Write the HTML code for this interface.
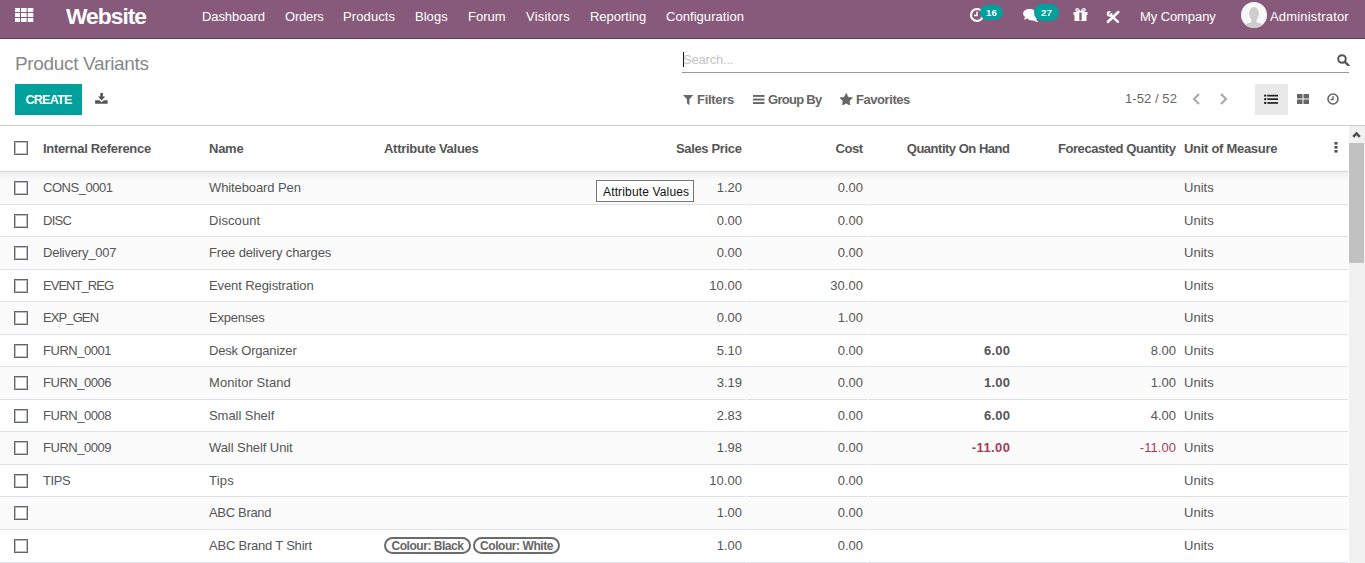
<!DOCTYPE html>
<html><head><meta charset="utf-8">
<style>
*{box-sizing:border-box;margin:0;padding:0}
html,body{width:1365px;height:563px;overflow:hidden;background:#fff}
body{font-family:"Liberation Sans",sans-serif;font-size:13px;color:#555;position:relative}
.a{position:absolute;white-space:nowrap;line-height:1}
#nav{position:absolute;left:0;top:0;width:1365px;height:39px;background:#875a7b;border-bottom:1px solid #5f3f57}
#nav .a{color:#fff}
.menu{font-size:13px;top:10px}
.b{font-weight:bold}
.hdr{font-weight:bold;top:142px}
.r{text-align:right}
.gap{position:absolute;width:1px;height:1px;background:#fff}
.cb{position:absolute;width:14px;height:14px;border:1px solid #666;box-shadow:inset 0 0 0 1px #b9bfc7;background:#fff;left:14px}
.row{position:absolute;left:0;width:1348px;border-bottom:1px solid #dee2e6}
.row.s{background:#fbfbfb}
.td{top:0}
.neg{color:#ac3a55}
.pill{position:absolute;height:17px;border:2px solid #6b6b6b;border-radius:9px;font-weight:bold;font-size:12px;color:#666;line-height:14px;text-align:center;white-space:nowrap}
</style></head><body>
<div id="nav">
  <!-- grid icon -->
  <svg class="a" style="left:15px;top:8px" width="19" height="14" viewBox="0 0 19 14">
    <g fill="#fff">
      <rect x="0" y="0" width="5" height="4"></rect><rect x="6" y="0" width="5.6" height="4"></rect><rect x="12.7" y="0" width="5.6" height="4"></rect>
      <rect x="0" y="5" width="5" height="4"></rect><rect x="6" y="5" width="5.6" height="4"></rect><rect x="12.7" y="5" width="5.6" height="4"></rect>
      <rect x="0" y="10" width="5" height="4"></rect><rect x="6" y="10" width="5.6" height="4"></rect><rect x="12.7" y="10" width="5.6" height="4"></rect>
    </g>
  </svg>
  <div class="a b nofit" style="left:66px;top:5px;font-size:22.8px;letter-spacing:-1px">Website</div>
  <div class="a menu" style="left: 202px; letter-spacing: -0.082px;">Dashboard</div>
  <div class="a menu" style="left: 285px; letter-spacing: -0.193px;">Orders</div>
  <div class="a menu" style="left: 343px; letter-spacing: 0.107px;">Products</div>
  <div class="a menu" style="left: 415px; letter-spacing: 0.031px;">Blogs</div>
  <div class="a menu" style="left: 468px; letter-spacing: -0.022px;">Forum</div>
  <div class="a menu" style="left: 526px; letter-spacing: 0.197px;">Visitors</div>
  <div class="a menu" style="left: 590px; letter-spacing: -0.016px;">Reporting</div>
  <div class="a menu" style="left: 666px; letter-spacing: 0.049px;">Configuration</div>

  <!-- activity clock -->
  <svg class="a" style="left:969px;top:7px" width="16" height="16" viewBox="0 0 16 16">
    <circle cx="8" cy="8" r="6" fill="none" stroke="#fff" stroke-width="2.2"></circle>
    <path d="M8 4.5V8.5H5" fill="none" stroke="#fff" stroke-width="1.5"></path>
  </svg>
  <div class="a" style="left: 980.09px; top: 5px; width: 23px; height: 15px; border-radius: 8px; background: rgb(0, 160, 157); font-size: 9.6px; font-weight: bold; line-height: 15px; text-align: center; letter-spacing: 0.172px;">16</div>

  <!-- chat -->
  <svg class="a" style="left:1023px;top:8px" width="18" height="15" viewBox="0 0 18 15">
    <path d="M9 11 Q14 11.5 15.5 14.2 L11 13 Z" fill="#fff"></path>
    <ellipse cx="9.5" cy="8.5" rx="6" ry="4" fill="#fff"></ellipse>
    <ellipse cx="6.5" cy="5.5" rx="6.5" ry="4.6" fill="#fff"></ellipse>
    <path d="M2 8.5 L1.2 12 L5.5 9.5Z" fill="#fff"></path>
  </svg>
  <div class="a" style="left: 1034.09px; top: 4px; width: 25px; height: 17px; border-radius: 9px; background: rgb(0, 160, 157); font-size: 9.8px; font-weight: bold; line-height: 17px; text-align: center; letter-spacing: 0.172px;">27</div>

  <!-- gift -->
  <svg class="a" style="left:1073px;top:8px" width="15" height="13" viewBox="0 0 15 13">
    <path d="M4 0.8 Q2.5 0.5 3 2.5 Q4 3.5 7 3.5 Q4.5 -0.5 4 0.8Z M11 0.8 Q12.5 0.5 12 2.5 Q11 3.5 8 3.5 Q10.5 -0.5 11 0.8Z" fill="none" stroke="#fff" stroke-width="1.2"></path>
    <rect x="0.5" y="4" width="14" height="3" fill="#fff"></rect>
    <rect x="1.5" y="7" width="12" height="6" fill="#fff"></rect>
    <rect x="6.3" y="4.5" width="2.4" height="8" fill="#875a7b"></rect>
  </svg>
  <!-- tools -->
  <svg class="a" style="left:1102px;top:6px" width="22" height="20" viewBox="0 0 22 20">
    <path d="M6 15.8 L16.3 6.1" stroke="#fff" stroke-width="2.7" stroke-linecap="round"></path>
    <path d="M9.4 9.8 L16 15.8" stroke="#fff" stroke-width="2.4" stroke-linecap="round"></path>
    <path d="M9.29 7.18 A1.8 1.8 0 1 1 8.22 6.11" fill="none" stroke="#fff" stroke-width="2.2"></path>
  </svg>
  <div class="a menu" style="left: 1140px; letter-spacing: -0.087px;">My Company</div>
  <svg class="a" style="left:1241px;top:2px" width="26" height="26" viewBox="0 0 26 26">
    <defs><clipPath id="cc"><circle cx="13" cy="13" r="13"></circle></clipPath></defs>
    <circle cx="13" cy="13" r="13" fill="#f8f8f8"></circle>
    <g clip-path="url(#cc)" fill="#cdcdcd">
      <ellipse cx="13" cy="11.5" rx="4.8" ry="6.6"></ellipse>
      <rect x="10.3" y="15" width="5.4" height="6"></rect>
      <path d="M2 27 Q3 21.5 10 20.6 L16 20.6 Q23 21.5 24 27Z"></path>
    </g>
  </svg>
  <div class="a menu" style="left: 1270px; letter-spacing: 0.175px;">Administrator</div>
</div>

<!-- control panel -->
<div class="a nofit" style="left:15px;top:54px;font-size:19px;color:#888;letter-spacing:-0.34px">Product Variants</div>
<div class="a" style="left:682px;top:51px;width:667px;height:22px;border-bottom:1px solid #999"></div>
<div class="a" style="left:683px;top:52px;width:1px;height:15px;background:#111"></div>
<div class="a" style="left: 683px; top: 53px; color: rgb(196, 196, 196); letter-spacing: -0.201px;">Search...</div>
<svg class="a" style="left:1337px;top:54px" width="13" height="12" viewBox="0 0 13 12">
  <circle cx="5" cy="5" r="3.8" fill="none" stroke="#555" stroke-width="2"></circle>
  <path d="M7.8 7.8 L11.5 11.3" stroke="#555" stroke-width="2.4" stroke-linecap="round"></path>
</svg>

<div class="a" style="left:15px;top:84px;width:67px;height:31px;background:#00a09d"></div>
<div class="a b" style="left: 25.5px; top: 94px; color: rgb(255, 255, 255); font-size: 12.6px; letter-spacing: -0.807px;">CREATE</div>
<svg class="a" style="left:95px;top:92.8px" width="13" height="11" viewBox="0 0 13 11">
  <path d="M5.3 0h2.6v3.6h2.2L6.6 7.5 3 3.6h2.3z" fill="#555"></path>
  <path d="M0.1 7.2h4.2l2.3 2.1 2.3-2.1h3.7v3.6H0.1z" fill="#555"></path>
</svg>

<svg class="a" style="left:683px;top:94.6px" width="11" height="11" viewBox="0 0 11 11">
  <path d="M0 0H10.3L6.4 4.3V10.3L4 8.3V4.3Z" fill="#666"></path>
</svg>
<div class="a b" style="left: 697px; top: 93px; color: rgb(102, 102, 102); letter-spacing: -0.306px;">Filters</div>
<svg class="a" style="left:752.5px;top:95px" width="12" height="9" viewBox="0 0 12 9">
  <rect y="0" width="11.5" height="1.9" fill="#666"></rect><rect y="3.6" width="11.5" height="1.9" fill="#666"></rect><rect y="7.1" width="11.5" height="1.9" fill="#666"></rect>
</svg>
<div class="a b" style="left: 768px; top: 93px; color: rgb(102, 102, 102); letter-spacing: -0.725px;">Group By</div>
<svg class="a" style="left:840px;top:93px" width="13" height="12" viewBox="0 0 13 12">
  <path d="M6.20 0.30 L8.14 4.23 L12.48 4.86 L9.34 7.92 L10.08 12.24 L6.20 10.20 L2.32 12.24 L3.06 7.92 L-0.08 4.86 L4.26 4.23Z" fill="#666" stroke="#666" stroke-width="0.6" stroke-linejoin="round"></path>
</svg>
<div class="a b" style="left: 856px; top: 93px; color: rgb(102, 102, 102); letter-spacing: -0.434px;">Favorites</div>

<div class="a" style="left: 1125px; top: 92px; color: rgb(102, 102, 102); letter-spacing: 0.068px;">1-52 / 52</div>
<svg class="a" style="left:1191px;top:93px" width="10" height="12" viewBox="0 0 10 12">
  <path d="M8 1 L3 6 L8 11" fill="none" stroke="#aaa" stroke-width="2.2"></path>
</svg>
<svg class="a" style="left:1219px;top:93px" width="10" height="12" viewBox="0 0 10 12">
  <path d="M2 1 L7 6 L2 11" fill="none" stroke="#aaa" stroke-width="2.2"></path>
</svg>
<div class="a" style="left:1255px;top:84px;width:33px;height:31px;background:#e9e9e9"></div>
<svg class="a" style="left:1264px;top:94px" width="14" height="11" viewBox="0 0 14 11">
  <g fill="#222"><circle cx="1.2" cy="1.6" r="1.2"></circle><circle cx="1.2" cy="5.1" r="1.2"></circle><circle cx="1.2" cy="8.9" r="1.2"></circle>
  <rect x="3.3" y="0.8" width="10.7" height="1.7"></rect><rect x="3.3" y="4.3" width="10.7" height="1.7"></rect><rect x="3.3" y="8.1" width="10.7" height="1.7"></rect></g>
</svg>
<svg class="a" style="left:1296.5px;top:93.5px" width="12" height="10" viewBox="0 0 12 10">
  <g fill="#666"><rect x="0" y="0" width="5.5" height="4.5"></rect><rect x="6.5" y="0" width="5.5" height="4.5"></rect><rect x="0" y="5.5" width="5.5" height="4.5"></rect><rect x="6.5" y="5.5" width="5.5" height="4.5"></rect></g>
</svg>
<svg class="a" style="left:1327px;top:93px" width="12" height="12" viewBox="0 0 12 12">
  <circle cx="6" cy="6" r="5" fill="none" stroke="#666" stroke-width="1.6"></circle>
  <path d="M6 3V6.5H3.5" fill="none" stroke="#666" stroke-width="1.3"></path>
</svg>
<div class="a" style="left:0;top:125px;width:1365px;height:1px;background:#ccc"></div>

<!-- table header -->
<div class="cb" style="top:141px"></div>
<div class="a hdr" style="left: 43px; letter-spacing: -0.313px;">Internal Reference</div>
<div class="a hdr" style="left: 209px; letter-spacing: -0.25px;">Name</div>
<div class="a hdr" style="left: 384px; letter-spacing: -0.282px;">Attribute Values</div>
<div class="a hdr r" style="left: 599.67px; width: 142px; letter-spacing: -0.334px;">Sales Price</div>
<div class="a hdr r" style="left: 759.51px; width: 103px; letter-spacing: -0.492px;">Cost</div>
<div class="a hdr r" style="left: 879.51px; width: 130px; letter-spacing: -0.485px;">Quantity On Hand</div>
<div class="a hdr r" style="left: 1019.58px; width: 156px; letter-spacing: -0.424px;">Forecasted Quantity</div>
<div class="a hdr" style="left: 1184px; letter-spacing: -0.292px;">Unit of Measure</div>
<svg class="a" style="left:1334px;top:142px" width="4" height="11" viewBox="0 0 4 11"><g fill="#4c4c4c"><rect x="0.5" y="0" width="3" height="2.6"></rect><rect x="0.5" y="4" width="3" height="2.6"></rect><rect x="0.5" y="8" width="3" height="2.6"></rect></g></svg>
<div class="a" style="left:0;top:171px;width:1348px;height:1px;background:#d6d9dc"></div>

<!--ROWS-->
<div class="row s" style="top:172px;height:33px"></div>
<div class="gap" style="left:746px;top:204px"></div><div class="gap" style="left:867px;top:204px"></div>
<div class="cb" style="top:181px"></div>
<div class="a td" style="left: 43px; top: 181px; letter-spacing: -0.469px;">CONS_0001</div>
<div class="a td" style="left: 209px; top: 181px; letter-spacing: -0.1px;">Whiteboard Pen</div>
<div class="a td r" style="left: 642.01px; width: 100px; top: 181px; letter-spacing: 0.012px;">1.20</div>
<div class="a td r" style="left: 763.01px; width: 100px; top: 181px; letter-spacing: 0.012px;">0.00</div>
<div class="a td" style="left: 1184px; top: 181px; letter-spacing: 0.022px;">Units</div>
<div class="row" style="top:205px;height:32px"></div>
<div class="gap" style="left:746px;top:236px"></div><div class="gap" style="left:867px;top:236px"></div>
<div class="cb" style="top:214px"></div>
<div class="a td" style="left: 43px; top: 214px; letter-spacing: -0.703px;">DISC</div>
<div class="a td" style="left: 209px; top: 214px; letter-spacing: 0.082px;">Discount</div>
<div class="a td r" style="left: 642.01px; width: 100px; top: 214px; letter-spacing: 0.012px;">0.00</div>
<div class="a td r" style="left: 763.01px; width: 100px; top: 214px; letter-spacing: 0.012px;">0.00</div>
<div class="a td" style="left: 1184px; top: 214px; letter-spacing: 0.022px;">Units</div>
<div class="row s" style="top:237px;height:33px"></div>
<div class="gap" style="left:746px;top:269px"></div><div class="gap" style="left:867px;top:269px"></div>
<div class="cb" style="top:246px"></div>
<div class="a td" style="left: 43px; top: 246px; letter-spacing: -0.214px;">Delivery_007</div>
<div class="a td" style="left: 209px; top: 246px; letter-spacing: -0.138px;">Free delivery charges</div>
<div class="a td r" style="left: 642.01px; width: 100px; top: 246px; letter-spacing: 0.012px;">0.00</div>
<div class="a td r" style="left: 763.01px; width: 100px; top: 246px; letter-spacing: 0.012px;">0.00</div>
<div class="a td" style="left: 1184px; top: 246px; letter-spacing: 0.022px;">Units</div>
<div class="row" style="top:270px;height:32px"></div>
<div class="gap" style="left:746px;top:301px"></div><div class="gap" style="left:867px;top:301px"></div>
<div class="cb" style="top:279px"></div>
<div class="a td" style="left: 43px; top: 279px; letter-spacing: -0.969px;">EVENT_REG</div>
<div class="a td" style="left: 209px; top: 279px; letter-spacing: -0.094px;">Event Registration</div>
<div class="a td r" style="left: 642.02px; width: 100px; top: 279px; letter-spacing: 0.022px;">10.00</div>
<div class="a td r" style="left: 763.02px; width: 100px; top: 279px; letter-spacing: 0.022px;">30.00</div>
<div class="a td" style="left: 1184px; top: 279px; letter-spacing: 0.022px;">Units</div>
<div class="row s" style="top:302px;height:33px"></div>
<div class="gap" style="left:746px;top:334px"></div><div class="gap" style="left:867px;top:334px"></div>
<div class="cb" style="top:311px"></div>
<div class="a td" style="left: 43px; top: 311px; letter-spacing: -0.9px;">EXP_GEN</div>
<div class="a td" style="left: 209px; top: 311px; letter-spacing: -0.195px;">Expenses</div>
<div class="a td r" style="left: 642.01px; width: 100px; top: 311px; letter-spacing: 0.012px;">0.00</div>
<div class="a td r" style="left: 763.01px; width: 100px; top: 311px; letter-spacing: 0.012px;">1.00</div>
<div class="a td" style="left: 1184px; top: 311px; letter-spacing: 0.022px;">Units</div>
<div class="row" style="top:335px;height:32px"></div>
<div class="gap" style="left:746px;top:366px"></div><div class="gap" style="left:867px;top:366px"></div>
<div class="cb" style="top:344px"></div>
<div class="a td" style="left: 43px; top: 344px; letter-spacing: -0.474px;">FURN_0001</div>
<div class="a td" style="left: 209px; top: 344px; letter-spacing: -0.198px;">Desk Organizer</div>
<div class="a td r" style="left: 642.01px; width: 100px; top: 344px; letter-spacing: 0.012px;">5.10</div>
<div class="a td r" style="left: 763.01px; width: 100px; top: 344px; letter-spacing: 0.012px;">0.00</div>
<div class="a td r b" style="left: 910.21px; width: 100px; top: 344px; letter-spacing: 0.211px;">6.00</div>
<div class="a td r" style="left: 1076.01px; width: 100px; top: 344px; letter-spacing: 0.012px;">8.00</div>
<div class="a td" style="left: 1184px; top: 344px; letter-spacing: 0.022px;">Units</div>
<div class="row s" style="top:367px;height:33px"></div>
<div class="gap" style="left:746px;top:399px"></div><div class="gap" style="left:867px;top:399px"></div>
<div class="cb" style="top:376px"></div>
<div class="a td" style="left: 43px; top: 376px; letter-spacing: -0.474px;">FURN_0006</div>
<div class="a td" style="left: 209px; top: 376px; letter-spacing: 0.069px;">Monitor Stand</div>
<div class="a td r" style="left: 642.01px; width: 100px; top: 376px; letter-spacing: 0.012px;">3.19</div>
<div class="a td r" style="left: 763.01px; width: 100px; top: 376px; letter-spacing: 0.012px;">0.00</div>
<div class="a td r b" style="left: 910.21px; width: 100px; top: 376px; letter-spacing: 0.211px;">1.00</div>
<div class="a td r" style="left: 1076.01px; width: 100px; top: 376px; letter-spacing: 0.012px;">1.00</div>
<div class="a td" style="left: 1184px; top: 376px; letter-spacing: 0.022px;">Units</div>
<div class="row" style="top:400px;height:32px"></div>
<div class="gap" style="left:746px;top:431px"></div><div class="gap" style="left:867px;top:431px"></div>
<div class="cb" style="top:409px"></div>
<div class="a td" style="left: 43px; top: 409px; letter-spacing: -0.474px;">FURN_0008</div>
<div class="a td" style="left: 209px; top: 409px; letter-spacing: -0.05px;">Small Shelf</div>
<div class="a td r" style="left: 642.01px; width: 100px; top: 409px; letter-spacing: 0.012px;">2.83</div>
<div class="a td r" style="left: 763.01px; width: 100px; top: 409px; letter-spacing: 0.012px;">0.00</div>
<div class="a td r b" style="left: 910.21px; width: 100px; top: 409px; letter-spacing: 0.211px;">6.00</div>
<div class="a td r" style="left: 1076.01px; width: 100px; top: 409px; letter-spacing: 0.012px;">4.00</div>
<div class="a td" style="left: 1184px; top: 409px; letter-spacing: 0.022px;">Units</div>
<div class="row s" style="top:432px;height:33px"></div>
<div class="gap" style="left:746px;top:464px"></div><div class="gap" style="left:867px;top:464px"></div>
<div class="cb" style="top:441px"></div>
<div class="a td" style="left: 43px; top: 441px; letter-spacing: -0.474px;">FURN_0009</div>
<div class="a td" style="left: 209px; top: 441px; letter-spacing: -0.075px;">Wall Shelf Unit</div>
<div class="a td r" style="left: 642.01px; width: 100px; top: 441px; letter-spacing: 0.012px;">1.98</div>
<div class="a td r" style="left: 763.01px; width: 100px; top: 441px; letter-spacing: 0.012px;">0.00</div>
<div class="a td r b neg" style="left: 910.43px; width: 100px; top: 441px; letter-spacing: 0.43px;">-11.00</div>
<div class="a td r neg" style="left: 1076.06px; width: 100px; top: 441px; letter-spacing: 0.057px;">-11.00</div>
<div class="a td" style="left: 1184px; top: 441px; letter-spacing: 0.022px;">Units</div>
<div class="row" style="top:465px;height:32px"></div>
<div class="gap" style="left:746px;top:496px"></div><div class="gap" style="left:867px;top:496px"></div>
<div class="cb" style="top:474px"></div>
<div class="a td" style="left: 43px; top: 474px; letter-spacing: -0.422px;">TIPS</div>
<div class="a td" style="left: 209px; top: 474px; letter-spacing: 0.215px;">Tips</div>
<div class="a td r" style="left: 642.02px; width: 100px; top: 474px; letter-spacing: 0.022px;">10.00</div>
<div class="a td r" style="left: 763.01px; width: 100px; top: 474px; letter-spacing: 0.012px;">0.00</div>
<div class="a td" style="left: 1184px; top: 474px; letter-spacing: 0.022px;">Units</div>
<div class="row s" style="top:497px;height:33px"></div>
<div class="gap" style="left:746px;top:529px"></div><div class="gap" style="left:867px;top:529px"></div>
<div class="cb" style="top:506px"></div>
<div class="a td" style="left: 209px; top: 506px; letter-spacing: -0.326px;">ABC Brand</div>
<div class="a td r" style="left: 642.01px; width: 100px; top: 506px; letter-spacing: 0.012px;">1.00</div>
<div class="a td r" style="left: 763.01px; width: 100px; top: 506px; letter-spacing: 0.012px;">0.00</div>
<div class="a td" style="left: 1184px; top: 506px; letter-spacing: 0.022px;">Units</div>
<div class="row" style="top:530px;height:33px"></div>
<div class="gap" style="left:746px;top:562px"></div><div class="gap" style="left:867px;top:562px"></div>
<div class="cb" style="top:539px"></div>
<div class="a td" style="left: 209px; top: 539px; letter-spacing: -0.214px;">ABC Brand T Shirt</div>
<div class="pill" style="left: 384px; top: 537px; width: 87px; letter-spacing: -0.464px;">Colour: Black</div>
<div class="pill" style="left: 473px; top: 537px; width: 87px; letter-spacing: -0.435px;">Colour: White</div>
<div class="a td r" style="left: 642.01px; width: 100px; top: 539px; letter-spacing: 0.012px;">1.00</div>
<div class="a td r" style="left: 763.01px; width: 100px; top: 539px; letter-spacing: 0.012px;">0.00</div>
<div class="a td" style="left: 1184px; top: 539px; letter-spacing: 0.022px;">Units</div>
<!--/ROWS-->
<div class="a" style="left:0;top:172px;width:1348px;height:8px;background:linear-gradient(rgba(0,0,0,0.055),rgba(0,0,0,0))"></div>

<!-- tooltip -->
<div class="a nofit" style="left:596px;top:180px;width:98px;height:22px;border:1px solid #767676;background:#fff;color:#111;font-size:12px;line-height:22px;padding-left:6px;letter-spacing:0.15px">Attribute Values</div>

<!-- scrollbar -->
<div class="a" style="left:1349px;top:126px;width:16px;height:437px;background:#f1f1f1"></div>
<div class="a" style="left:1349px;top:143px;width:15px;height:120px;background:#c1c1c1"></div>
<svg class="a" style="left:1352px;top:131px" width="9" height="7" viewBox="0 0 9 7"><path d="M1.2 5.8 L4.5 2.3 L7.8 5.8" fill="none" stroke="#505050" stroke-width="2.6"></path></svg>

</body></html>
